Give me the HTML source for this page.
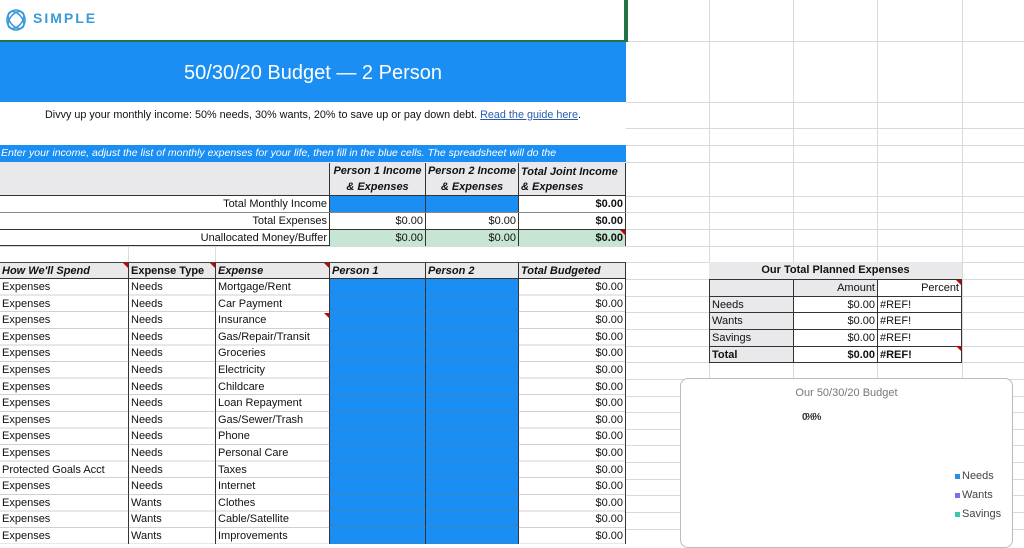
<!DOCTYPE html>
<html><head><meta charset="utf-8"><style>
*{margin:0;padding:0;box-sizing:border-box}
body{width:1024px;height:544px;overflow:hidden;background:#fff;font-family:"Liberation Sans",sans-serif;font-size:11px;color:#111;position:relative}
.a{position:absolute}
.hl{position:absolute;left:0;width:1024px;height:1px;background:#d9d9d9}
.vl{position:absolute;top:0;width:1px;height:544px;background:#d9d9d9}
.c{position:absolute;height:17px;line-height:17px;white-space:nowrap;overflow:hidden;padding:0 2px}
.r{text-align:right}
.i{font-style:italic;font-weight:bold}
.b{font-weight:bold}
.blue{background:#1a8ef2}
.grn{background:#c6e5d2}
.gray{background:#e9e9ec}
.tri{position:absolute;width:0;height:0;border-top:5px solid #c00;border-left:5px solid transparent}
</style></head><body>
<div class="vl" style="left:709px"></div><div class="vl" style="left:793px"></div><div class="vl" style="left:877px"></div><div class="vl" style="left:962px"></div>
<div class="hl" style="top:41px"></div><div class="hl" style="top:102px"></div><div class="hl" style="top:128px"></div><div class="hl" style="top:145px"></div><div class="hl" style="top:162px"></div><div class="hl" style="top:196px"></div><div class="hl" style="top:212px"></div><div class="hl" style="top:229px"></div><div class="hl" style="top:246px"></div><div class="hl" style="top:262px"></div>
<div class="hl" style="top:279px"></div><div class="hl" style="top:296px"></div><div class="hl" style="top:312px"></div><div class="hl" style="top:329px"></div><div class="hl" style="top:346px"></div><div class="hl" style="top:362px"></div><div class="hl" style="top:379px"></div><div class="hl" style="top:396px"></div><div class="hl" style="top:412px"></div><div class="hl" style="top:429px"></div><div class="hl" style="top:445px"></div><div class="hl" style="top:462px"></div><div class="hl" style="top:479px"></div><div class="hl" style="top:495px"></div><div class="hl" style="top:512px"></div><div class="hl" style="top:529px"></div>
<div class="a" style="left:0;top:0;width:626px;height:42px;background:#fff;border-right:2px solid #217346;border-bottom:2px solid #217346"></div>
<svg class="a" style="left:5px;top:8px" width="22" height="24" viewBox="0 0 22 24"><g fill="none" stroke="#3a9bd8" stroke-width="1.6"><ellipse cx="11" cy="12" rx="9" ry="10"/><ellipse cx="11" cy="12" rx="6" ry="10" transform="rotate(40 11 12)"/><ellipse cx="11" cy="12" rx="6" ry="10" transform="rotate(-40 11 12)"/></g></svg>
<div class="a" style="left:33px;top:10px;font-size:14px;font-weight:bold;letter-spacing:2px;color:#3a9bd8">SIMPLE</div>
<div class="a blue" style="left:0;top:42px;width:626px;height:60px;color:#fff;font-size:20px;text-align:center;line-height:62px">50/30/20 Budget — 2 Person</div>
<div class="a" style="left:0;top:102px;width:626px;height:26px;background:#fff;text-align:center;line-height:26px;font-size:10.8px">Divvy up your monthly income: 50% needs, 30% wants, 20% to save up or pay down debt. <span style="color:#2a5db0;text-decoration:underline">Read the guide here</span>.</div>
<div class="a" style="left:0;top:128px;width:626px;height:17px;background:#fff"></div>
<div class="a blue" style="left:0;top:145px;width:626px;height:17px;color:#fff;font-style:italic;font-size:10.5px;line-height:17px;white-space:nowrap;overflow:hidden;padding-left:1px">Enter your income, adjust the list of monthly expenses for your life, then fill in the blue cells. The spreadsheet will do the</div>
<div class="a gray" style="left:0;top:162px;width:626px;height:34px;border-bottom:1px solid #333"></div>
<div class="a i" style="left:329px;top:163px;width:96px;height:33px;border-left:1px solid #333;text-align:center;line-height:16px">Person 1 Income<br>&amp; Expenses</div>
<div class="a i" style="left:425px;top:163px;width:93px;height:33px;border-left:1px solid #333;text-align:center;line-height:16px">Person 2 Income<br>&amp; Expenses</div>
<div class="a i" style="left:518px;top:163px;width:108px;height:33px;border-left:1px solid #333;border-right:1px solid #333;line-height:15px;padding:2px 2px">Total Joint Income<br>&amp; Expenses</div>
<div class="a" style="left:0;top:196px;width:626px;height:50px;background:#fff;border-bottom:1px solid #333"></div>
<div class="c r" style="left:0;top:196px;width:329px">Total Monthly Income</div>
<div class="c blue" style="left:329px;top:196px;width:96px;border-left:1px solid #333"></div>
<div class="c blue" style="left:425px;top:196px;width:93px;border-left:1px solid #333"></div>
<div class="c r b" style="left:518px;top:196px;width:108px;border-left:1px solid #333;border-right:1px solid #333">$0.00</div>
<div class="a" style="left:0;top:212px;width:626px;height:1px;background:#888"></div>
<div class="c r" style="left:0;top:213px;width:329px">Total Expenses</div>
<div class="c r" style="left:329px;top:213px;width:96px;border-left:1px solid #333">$0.00</div>
<div class="c r" style="left:425px;top:213px;width:93px;border-left:1px solid #333">$0.00</div>
<div class="c r b" style="left:518px;top:213px;width:108px;border-left:1px solid #333;border-right:1px solid #333">$0.00</div>
<div class="a" style="left:0;top:229px;width:626px;height:1px;background:#333"></div>
<div class="c r" style="left:0;top:230px;width:329px;height:16px">Unallocated Money/Buffer</div>
<div class="c r grn" style="left:329px;top:230px;width:96px;height:16px;border-left:1px solid #333">$0.00</div>
<div class="c r grn" style="left:425px;top:230px;width:93px;height:16px;border-left:1px solid #333">$0.00</div>
<div class="c r b grn" style="left:518px;top:230px;width:108px;height:16px;border-left:1px solid #333;border-right:1px solid #333">$0.00</div>
<div class="tri" style="left:620px;top:230px"></div>
<div class="a" style="left:0;top:247px;width:626px;height:15px;background:#fff"></div>
<div class="a" style="left:128px;top:247px;width:1px;height:15px;background:#ddd"></div>
<div class="a" style="left:215px;top:247px;width:1px;height:15px;background:#ddd"></div>
<div class="a" style="left:0;top:262px;width:626px;height:282px;background:#fff;border-top:1px solid #444"></div>
<div class="a gray" style="left:0;top:263px;width:626px;height:16px;border-bottom:1px solid #333"></div>
<div class="c i" style="left:0;top:263px;width:128px">How We'll Spend</div>
<div class="c b" style="left:128px;top:263px;width:87px;border-left:1px solid #333">Expense Type</div>
<div class="c i" style="left:215px;top:263px;width:114px;border-left:1px solid #333">Expense</div>
<div class="c i" style="left:329px;top:263px;width:96px;border-left:1px solid #333">Person 1</div>
<div class="c i" style="left:425px;top:263px;width:93px;border-left:1px solid #333">Person 2</div>
<div class="c i" style="left:518px;top:263px;width:108px;border-left:1px solid #333;border-right:1px solid #333">Total Budgeted</div>
<div class="tri" style="left:123px;top:263px"></div><div class="tri" style="left:210px;top:263px"></div><div class="tri" style="left:324px;top:263px"></div>
<div class="a blue" style="left:330px;top:279px;width:188px;height:265px"></div>
<div class="a" style="left:128px;top:279px;width:1px;height:265px;background:#333"></div>
<div class="a" style="left:215px;top:279px;width:1px;height:265px;background:#333"></div>
<div class="a" style="left:329px;top:279px;width:1px;height:265px;background:#333"></div>
<div class="a" style="left:425px;top:279px;width:1px;height:265px;background:#333"></div>
<div class="a" style="left:518px;top:279px;width:1px;height:265px;background:#333"></div>
<div class="a" style="left:625px;top:279px;width:1px;height:265px;background:#333"></div>
<div class="tri" style="left:324px;top:313px"></div>
<div class="a" style="left:0;top:279px;width:626px">
<div style="position:relative">
<div class="c" style="left:0;top:0">Expenses</div><div class="c" style="left:129px;top:0">Needs</div><div class="c" style="left:216px;top:0">Mortgage/Rent</div><div class="c r" style="left:519px;top:0;width:106px">$0.00</div>
<div class="c" style="left:0;top:16.6px">Expenses</div><div class="c" style="left:129px;top:16.6px">Needs</div><div class="c" style="left:216px;top:16.6px">Car Payment</div><div class="c r" style="left:519px;top:16.6px;width:106px">$0.00</div>
<div class="c" style="left:0;top:33.2px">Expenses</div><div class="c" style="left:129px;top:33.2px">Needs</div><div class="c" style="left:216px;top:33.2px">Insurance</div><div class="c r" style="left:519px;top:33.2px;width:106px">$0.00</div>
<div class="c" style="left:0;top:49.8px">Expenses</div><div class="c" style="left:129px;top:49.8px">Needs</div><div class="c" style="left:216px;top:49.8px">Gas/Repair/Transit</div><div class="c r" style="left:519px;top:49.8px;width:106px">$0.00</div>
<div class="c" style="left:0;top:66.4px">Expenses</div><div class="c" style="left:129px;top:66.4px">Needs</div><div class="c" style="left:216px;top:66.4px">Groceries</div><div class="c r" style="left:519px;top:66.4px;width:106px">$0.00</div>
<div class="c" style="left:0;top:83px">Expenses</div><div class="c" style="left:129px;top:83px">Needs</div><div class="c" style="left:216px;top:83px">Electricity</div><div class="c r" style="left:519px;top:83px;width:106px">$0.00</div>
<div class="c" style="left:0;top:99.6px">Expenses</div><div class="c" style="left:129px;top:99.6px">Needs</div><div class="c" style="left:216px;top:99.6px">Childcare</div><div class="c r" style="left:519px;top:99.6px;width:106px">$0.00</div>
<div class="c" style="left:0;top:116.2px">Expenses</div><div class="c" style="left:129px;top:116.2px">Needs</div><div class="c" style="left:216px;top:116.2px">Loan Repayment</div><div class="c r" style="left:519px;top:116.2px;width:106px">$0.00</div>
<div class="c" style="left:0;top:132.8px">Expenses</div><div class="c" style="left:129px;top:132.8px">Needs</div><div class="c" style="left:216px;top:132.8px">Gas/Sewer/Trash</div><div class="c r" style="left:519px;top:132.8px;width:106px">$0.00</div>
<div class="c" style="left:0;top:149.4px">Expenses</div><div class="c" style="left:129px;top:149.4px">Needs</div><div class="c" style="left:216px;top:149.4px">Phone</div><div class="c r" style="left:519px;top:149.4px;width:106px">$0.00</div>
<div class="c" style="left:0;top:166px">Expenses</div><div class="c" style="left:129px;top:166px">Needs</div><div class="c" style="left:216px;top:166px">Personal Care</div><div class="c r" style="left:519px;top:166px;width:106px">$0.00</div>
<div class="c" style="left:0;top:182.6px">Protected Goals Acct</div><div class="c" style="left:129px;top:182.6px">Needs</div><div class="c" style="left:216px;top:182.6px">Taxes</div><div class="c r" style="left:519px;top:182.6px;width:106px">$0.00</div>
<div class="c" style="left:0;top:199.2px">Expenses</div><div class="c" style="left:129px;top:199.2px">Needs</div><div class="c" style="left:216px;top:199.2px">Internet</div><div class="c r" style="left:519px;top:199.2px;width:106px">$0.00</div>
<div class="c" style="left:0;top:215.8px">Expenses</div><div class="c" style="left:129px;top:215.8px">Wants</div><div class="c" style="left:216px;top:215.8px">Clothes</div><div class="c r" style="left:519px;top:215.8px;width:106px">$0.00</div>
<div class="c" style="left:0;top:232.4px">Expenses</div><div class="c" style="left:129px;top:232.4px">Wants</div><div class="c" style="left:216px;top:232.4px">Cable/Satellite</div><div class="c r" style="left:519px;top:232.4px;width:106px">$0.00</div>
<div class="c" style="left:0;top:249px">Expenses</div><div class="c" style="left:129px;top:249px">Wants</div><div class="c" style="left:216px;top:249px">Improvements</div><div class="c r" style="left:519px;top:249px;width:106px">$0.00</div>
</div></div>
<div class="a" style="left:0;top:279px;width:626px;height:265px;background:repeating-linear-gradient(to bottom,transparent 0,transparent 15.6px,rgba(120,120,120,.35) 15.6px,rgba(120,120,120,.35) 16.6px);pointer-events:none"></div>
<div class="a" style="left:626px;top:0;width:2px;height:42px;background:#217346"></div>
<div class="a gray b" style="left:709px;top:262px;width:253px;height:17px;text-align:center;line-height:17px">Our Total Planned Expenses</div>
<div class="a" style="left:709px;top:279px;width:253px;height:84px;border:1px solid #333;background:#fff"></div>
<div class="c gray" style="left:710px;top:280px;width:83px;height:16px"></div>
<div class="c r gray" style="left:793px;top:280px;width:84px;height:16px;border-left:1px solid #333">Amount</div>
<div class="c r" style="left:877px;top:280px;width:84px;height:16px;border-left:1px solid #333">Percent</div>
<div class="tri" style="left:956px;top:280px"></div>
<div class="c gray" style="left:710px;top:296px;width:83px;height:16px;border-top:1px solid #333">Needs</div>
<div class="c r" style="left:793px;top:296px;width:84px;height:16px;border-left:1px solid #333;border-top:1px solid #333">$0.00</div>
<div class="c" style="left:877px;top:296px;width:84px;height:16px;border-left:1px solid #333;border-top:1px solid #333">#REF!</div>
<div class="c gray" style="left:710px;top:312px;width:83px;height:17px;border-top:1px solid #333">Wants</div>
<div class="c r" style="left:793px;top:312px;width:84px;height:17px;border-left:1px solid #333;border-top:1px solid #333">$0.00</div>
<div class="c" style="left:877px;top:312px;width:84px;height:17px;border-left:1px solid #333;border-top:1px solid #333">#REF!</div>
<div class="c gray" style="left:710px;top:329px;width:83px;height:17px;border-top:1px solid #333">Savings</div>
<div class="c r" style="left:793px;top:329px;width:84px;height:17px;border-left:1px solid #333;border-top:1px solid #333">$0.00</div>
<div class="c" style="left:877px;top:329px;width:84px;height:17px;border-left:1px solid #333;border-top:1px solid #333">#REF!</div>
<div class="c gray b" style="left:710px;top:346px;width:83px;height:16px;border-top:1px solid #333">Total</div>
<div class="c r b" style="left:793px;top:346px;width:84px;height:16px;border-left:1px solid #333;border-top:1px solid #333">$0.00</div>
<div class="c b" style="left:877px;top:346px;width:84px;height:16px;border-left:1px solid #333;border-top:1px solid #333">#REF!</div>
<div class="tri" style="left:956px;top:346px"></div>
<div class="a" style="left:680px;top:378px;width:333px;height:170px;background:#fff;border:1px solid #bbb;border-radius:8px">
<div class="a" style="left:0;top:8px;width:100%;text-align:center;color:#777;font-size:11px">Our 50/30/20 Budget</div>
<div class="a b" style="left:121px;top:33px;font-size:10px;color:#333;letter-spacing:-2px">0%%</div>
<div class="a" style="left:274px;top:88px;font-size:11px;color:#444;line-height:19px">
<div><span style="display:inline-block;width:5px;height:5px;background:#2a8fe0;vertical-align:middle;margin-right:2px"></span>Needs</div>
<div><span style="display:inline-block;width:5px;height:5px;background:#7b6ee6;vertical-align:middle;margin-right:2px"></span>Wants</div>
<div><span style="display:inline-block;width:5px;height:5px;background:#3cc7b0;vertical-align:middle;margin-right:2px"></span>Savings</div>
</div></div>
</body></html>
